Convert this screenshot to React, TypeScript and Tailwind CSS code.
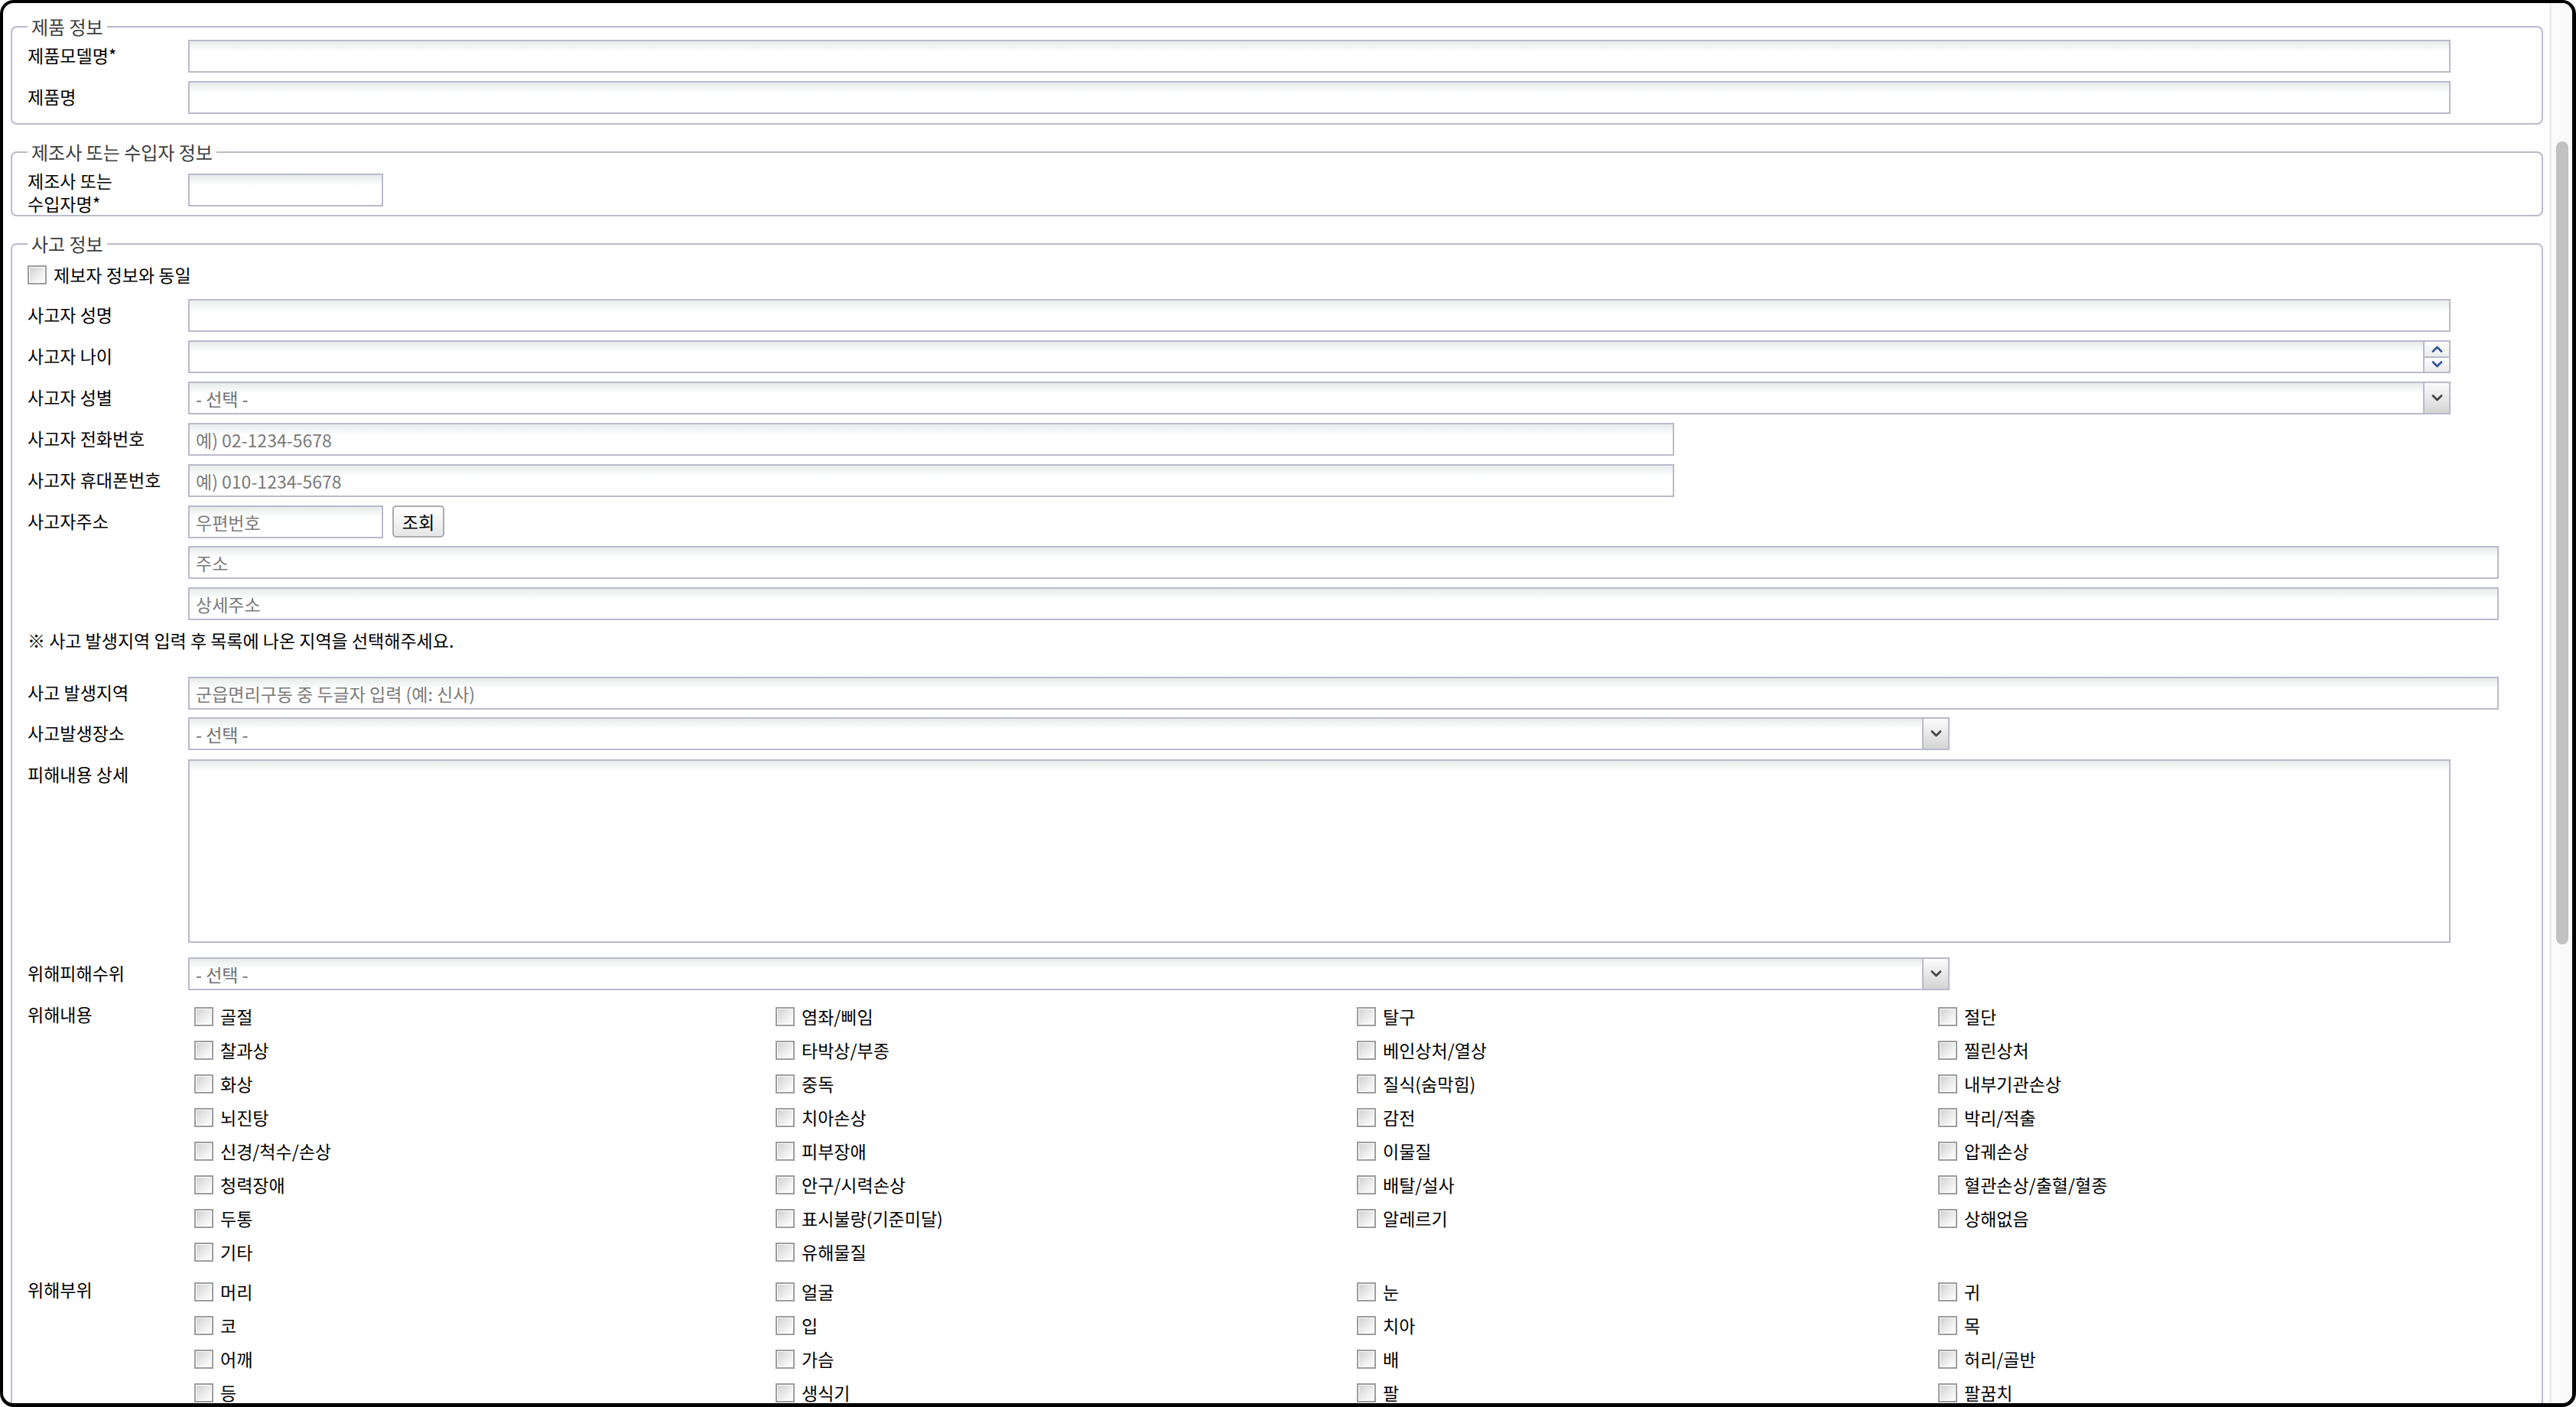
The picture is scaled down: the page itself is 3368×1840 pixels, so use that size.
import type { ReactNode } from "react";

const INPUT =
  "h-[43px] shrink-0 border-2 border-[#babacc] bg-[linear-gradient(to_bottom,#e8ebeb,#ffffff_14px)] px-[8px] text-[23px] text-[#222] placeholder:text-[#7a7a7a] outline-none";

const BOX = "border-2 border-[#babacc] bg-[linear-gradient(to_bottom,#e8ebeb,#ffffff_14px)]";

const harmContent = [
  "골절", "염좌/삐임", "탈구", "절단",
  "찰과상", "타박상/부종", "베인상처/열상", "찔린상처",
  "화상", "중독", "질식(숨막힘)", "내부기관손상",
  "뇌진탕", "치아손상", "감전", "박리/적출",
  "신경/척수/손상", "피부장애", "이물질", "압궤손상",
  "청력장애", "안구/시력손상", "배탈/설사", "혈관손상/출혈/혈종",
  "두통", "표시불량(기준미달)", "알레르기", "상해없음",
  "기타", "유해물질",
];

const harmParts = [
  "머리", "얼굴", "눈", "귀",
  "코", "입", "치아", "목",
  "어깨", "가슴", "배", "허리/골반",
  "등", "생식기", "팔", "팔꿈치",
  "손목", "손", "다리", "무릎",
];

const Chevron = ({ up, color }: { up?: boolean; color: string }) => (
  <svg width="15" height="9" viewBox="0 0 15 9">
    <path
      d={up ? "M2 7.5 L7.5 2 L13 7.5" : "M2 1.5 L7.5 7 L13 1.5"}
      fill="none"
      stroke={color}
      strokeWidth="2.6"
      strokeLinecap="round"
      strokeLinejoin="round"
    />
  </svg>
);

const Check = () => (
  <span className="h-[25px] w-[25px] shrink-0 border-2 border-[#9d9d9d] bg-[linear-gradient(135deg,#cfcfcf,#f4f4f4_70%,#ffffff)] shadow-[inset_1px_1px_0_#ffffff,inset_-1px_-1px_0_#ffffff]" />
);

type RowProps = { label?: ReactNode; children: ReactNode; className?: string };

const Row = ({ label, children, className = "" }: RowProps) => (
  <div className={"flex items-start " + className}>
    <div className="flex h-[40px] w-[210px] shrink-0 items-center text-black">{label}</div>
    {children}
  </div>
);

const Select = ({ width }: { width: string }) => (
  <div className={"flex h-[43px] shrink-0 " + BOX + " " + width}>
    <div className="flex flex-1 items-center px-[8px] text-[#6f6f6f]">- 선택 -</div>
    <div className="flex w-[34px] items-center justify-center rounded-tr-[3px] border-l-2 border-[#babacc] bg-[linear-gradient(to_bottom,#fbfbfb,#d4d4d4)]">
      <Chevron color="#444" />
    </div>
  </div>
);

const CheckGrid = ({ items }: { items: string[] }) => (
  <div className="grid shrink-0 grid-cols-[repeat(4,760px)] auto-rows-[44px]">
    {items.map((t) => (
      <label key={t} className="flex items-center gap-[9px] pl-[8px] text-black">
        <Check />
        {t}
      </label>
    ))}
  </div>
);

const Fieldset = ({ title, children, className = "" }: { title: string; children: ReactNode; className?: string }) => (
  <fieldset className={"min-w-0 rounded-[8px] border-2 border-[#babacc] pl-[20px] pr-[54px] " + className}>
    <legend className="px-[5px] text-[24px] leading-[28px] text-[#3c3c3c]">{title}</legend>
    {children}
  </fieldset>
);

export default function App() {
  return (
    <div className="h-[1840px] w-[3368px] overflow-hidden bg-white font-['Noto_Sans_CJK_KR',sans-serif] text-[23px] leading-[28px]">
      <div className="flex h-full overflow-hidden rounded-[18px] border-[4px] border-b-[5px] border-r-[5px] border-black">
        <div className="min-w-0 flex-1 overflow-hidden pl-[10px] pr-[8px] pt-[17px]">
          <Fieldset title="제품 정보" className="pb-[12px]">
            <div className="flex flex-col gap-[11px] pt-[3px]">
              <Row label="제품모델명*">
                <input className={INPUT + " w-[2958px]"} />
              </Row>
              <Row label="제품명">
                <input className={INPUT + " w-[2958px]"} />
              </Row>
            </div>
          </Fieldset>

          <Fieldset title="제조사 또는 수입자 정보" className="mt-[22px]">
            <div className="flex items-start pt-[8px]">
              <div className="w-[210px] shrink-0 leading-[30px] text-black">
                제조사 또는
                <br />
                수입자명*
              </div>
              <input className={INPUT + " mt-[6px] w-[255px]"} />
            </div>
          </Fieldset>

          <Fieldset title="사고 정보" className="mt-[22px] pb-[40px]">
            <label className="mt-[12px] flex h-[28px] items-center gap-[9px] text-black">
              <Check />
              제보자 정보와 동일
            </label>
            <Row label="사고자 성명" className="mt-[18px]">
              <input className={INPUT + " w-[2958px]"} />
            </Row>
            <Row label="사고자 나이" className="mt-[11px]">
              <div className={"flex h-[43px] w-[2958px] shrink-0 " + BOX}>
                <div className="flex-1" />
                <div className="flex w-[34px] flex-col border-l-2 border-[#babacc]">
                  <div className="flex flex-1 items-center justify-center rounded-tr-[3px] border-b-2 border-[#babacc] bg-[linear-gradient(to_bottom,#fdfdfd,#ececec)]">
                    <Chevron up color="#2f5597" />
                  </div>
                  <div className="flex flex-1 items-center justify-center bg-[linear-gradient(to_bottom,#fdfdfd,#ececec)]">
                    <Chevron color="#2f5597" />
                  </div>
                </div>
              </div>
            </Row>
            <Row label="사고자 성별" className="mt-[11px]">
              <Select width="w-[2958px]" />
            </Row>
            <Row label="사고자 전화번호" className="mt-[11px]">
              <input className={INPUT + " w-[1943px]"} placeholder="예) 02-1234-5678" />
            </Row>
            <Row label="사고자 휴대폰번호" className="mt-[11px]">
              <input className={INPUT + " w-[1943px]"} placeholder="예) 010-1234-5678" />
            </Row>
            <Row label="사고자주소" className="mt-[11px]">
              <input className={INPUT + " w-[255px]"} placeholder="우편번호" />
              <button className="ml-[12px] h-[42px] w-[68px] rounded-[5px] border-2 border-[#ababab] bg-[linear-gradient(to_bottom,#ffffff,#e6e6e6)] text-black">
                조회
              </button>
            </Row>
            <Row className="mt-[10px]">
              <input className={INPUT + " w-[3021px]"} placeholder="주소" />
            </Row>
            <Row className="mt-[11px]">
              <input className={INPUT + " w-[3021px]"} placeholder="상세주소" />
            </Row>
            <p className="mt-[12px] text-black">※ 사고 발생지역 입력 후 목록에 나온 지역을 선택해주세요.</p>
            <Row label="사고 발생지역" className="mt-[34px]">
              <input className={INPUT + " w-[3021px]"} placeholder="군읍면리구동 중 두글자 입력 (예: 신사)" />
            </Row>
            <Row label="사고발생장소" className="mt-[10px]">
              <Select width="w-[2303px]" />
            </Row>
            <div className="mt-[12px] flex items-start">
              <div className="flex h-[38px] w-[210px] shrink-0 items-center text-black">피해내용 상세</div>
              <textarea className={"h-[240px] w-[2958px] shrink-0 resize-none outline-none " + BOX} />
            </div>
            <Row label="위해피해수위" className="mt-[19px]">
              <Select width="w-[2303px]" />
            </Row>
            <div className="mt-[12px] flex items-start">
              <div className="flex h-[38px] w-[210px] shrink-0 items-center text-black">위해내용</div>
              <CheckGrid items={harmContent} />
            </div>
            <div className="mt-[8px] flex items-start">
              <div className="flex h-[38px] w-[210px] shrink-0 items-center text-black">위해부위</div>
              <CheckGrid items={harmParts} />
            </div>
          </Fieldset>
        </div>

        {/* scrollbar */}
        <div className="w-[30px] shrink-0 border-l-[3px] border-[#ececec] bg-[#fafafa]">
          <div className="mx-auto mt-[181px] h-[1050px] w-[16px] rounded-full bg-[#c1c1c1]" />
        </div>
      </div>
    </div>
  );
}
